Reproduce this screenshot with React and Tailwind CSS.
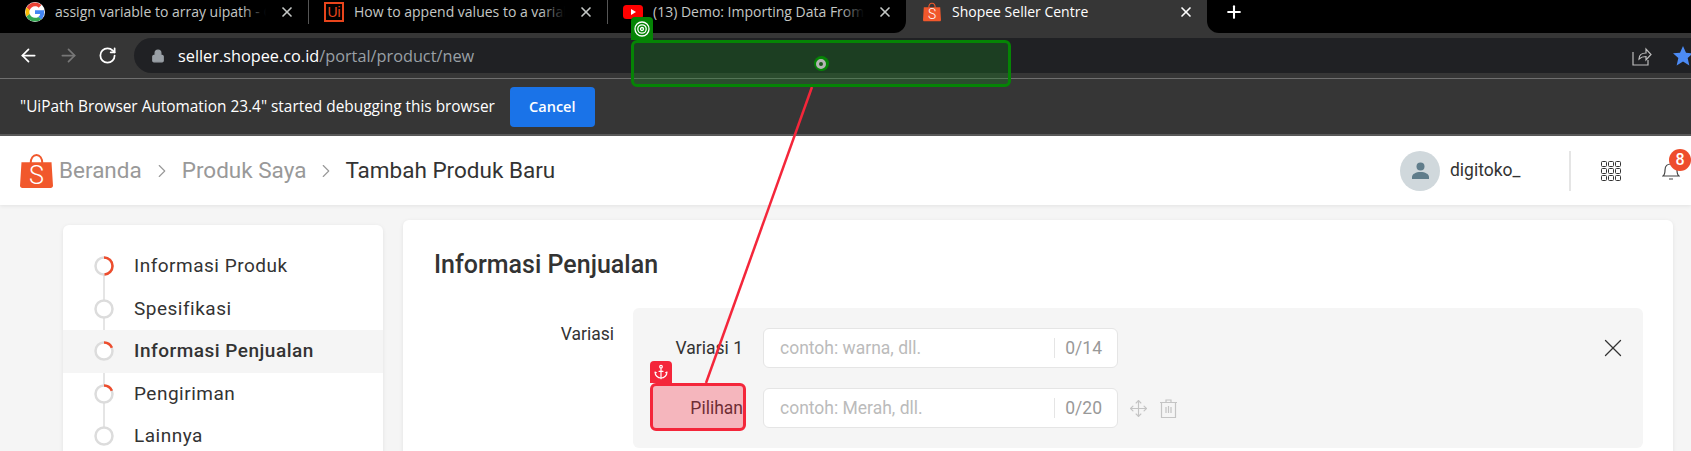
import React from "react";
import { ArrowLeft, ArrowRight, RotateCw, Lock, X, Plus, Anchor, ChevronRight, Move } from "lucide-react";

function GoogleIcon() {
  return (
    <svg width="20" height="20" viewBox="0 0 48 48" className="rounded-full bg-white">
      <path fill="#EA4335" d="M24 10c3.4 0 6.5 1.2 8.9 3.5l6.6-6.6C35.500 3.200 30.100 1 24 1 15 1 7.200 6.200 3.500 13.700l7.700 6C13 14.200 18 10 24 10z" />
      <path fill="#4285F4" d="M46 24.500c0-1.600-.1-3.100-.4-4.500H24v9h12.400c-.5 2.900-2.200 5.300-4.600 7l7.500 5.800C43.500 37.900 46 31.800 46 24.500z" />
      <path fill="#FBBC05" d="M11.200 28.700c-.5-1.400-.7-3-.7-4.700s.3-3.200.7-4.700l-7.700-6C2 16.400 1 20.100 1 24s1 7.600 2.500 10.700l7.700-6z" />
      <path fill="#34A853" d="M24 47c6.100 0 11.400-2 15.300-5.500L31.800 35.700c-2.100 1.400-4.700 2.300-7.800 2.300-6 0-11-4.200-12.800-9.300l-7.700 6C7.200 41.800 15 47 24 47z" />
    </svg>
  );
}

function UiIcon() {
  return (
    <div className="w-5 h-5 border-2 border-[#e8451c] flex items-center justify-center text-[14px] leading-none text-[#e8451c] font-['Liberation_Sans',sans-serif]">
      Ui
    </div>
  );
}

function YoutubeIcon() {
  return (
    <svg width="20" height="14" viewBox="0 0 20 14">
      <rect width="20" height="14" rx="3.500" fill="#f00" />
      <path d="M8 4l5 3-5 3z" fill="#fff" />
    </svg>
  );
}

function ShopeeBag({ width, height }) {
  return (
    <svg width={width} height={height} viewBox="0 0 34 36">
      <path d="M11 10c0-5 2.500-8.500 6-8.500S23 5 23 10" fill="none" stroke="#f1582c" strokeWidth="2" />
      <path d="M1.500 9h31L34 33c0 1.500-1 2.500-2.500 2.500h-29C1 35.500 0 34.500 0 33z" fill="#f1582c" />
      <text x="17" y="31" textAnchor="middle" fontSize="26" fill="#fff" fontFamily="Roboto, sans-serif" fontWeight="300">S</text>
    </svg>
  );
}

function Tab({ icon, title, width, active, separator, className }) {
  return (
    <div className={`h-[33px] flex items-start shrink-0 ${width} ${active ? "bg-[#363636] text-white" : "bg-black text-[#c4c7c5]"} ${className || ""}`}>
      <div className="flex-1 min-w-0 h-[23px] flex items-center">
        <div className="w-5 flex justify-center shrink-0">{icon}</div>
        <div className="relative flex-1 ml-[10px] overflow-hidden whitespace-nowrap text-[14px]">
          {title}
          {!active && <div className="absolute right-0 top-0 bottom-0 w-6 bg-gradient-to-r from-transparent to-black" />}
        </div>
        <X size={16} strokeWidth={2.500} className={`shrink-0 mx-[13px] ${active ? "text-white" : "text-[#c4c7c5]"}`} />
      </div>
      {separator && <div className="w-px h-6 bg-[#555] shrink-0" />}
    </div>
  );
}

function StepDot({ arc }) {
  return (
    <svg width="20" height="20" viewBox="0 0 20 20" className="-rotate-90 bg-transparent">
      <circle cx="10" cy="10" r="8.500" fill="#fff" stroke="#dcdcdc" strokeWidth="2.500" />
      <circle cx="10" cy="10" r="8.500" fill="none" stroke="#ee4d2d" strokeWidth="2.500" strokeDasharray={`${arc} 60`} />
    </svg>
  );
}

const steps = [
  { label: "Informasi Produk", arc: 26 },
  { label: "Spesifikasi", arc: 0 },
  { label: "Informasi Penjualan", arc: 10, current: true },
  { label: "Pengiriman", arc: 10 },
  { label: "Lainnya", arc: 0 },
];

function VariantRow({ label, placeholder, count, tools }) {
  return (
    <div className="flex items-center h-10">
      <div className="w-[110px] text-right text-[#333] text-[17.500px]">{label}</div>
      <div className="ml-5 w-[355px] h-10 bg-white border border-[#e5e5e5] rounded-md flex items-center pl-4 pr-[15px]">
        <span className="flex-1 text-[#bbb] text-[17.500px]">{placeholder}</span>
        <span className="h-5 w-px bg-[#e5e5e5] mr-[10px]" />
        <span className="text-[#999] text-[17.500px]">{count}</span>
      </div>
      {tools && (
        <div className="flex items-center ml-[11px] gap-3 text-[#c4c4c4]">
          <Move size={19} strokeWidth={1.500} />
          <svg width="17" height="19" viewBox="0 0 17 19" fill="none" stroke="currentColor" strokeWidth="1.200">
            <path d="M0 3.500h17M6 3.500V1h5v2.500M1.500 3.500v15h14v-15M6 8v6M8.500 7v7M11 8v6" />
          </svg>
        </div>
      )}
    </div>
  );
}

export default function App() {
  return (
    <div className="relative w-[1691px] h-[451px] overflow-hidden bg-[#f5f5f5] font-['Roboto',sans-serif]">
      {/* CHROME TABS */}
      <div className="flex h-[33px] bg-[#363636] font-['Open_Sans',sans-serif]">
        <Tab width="w-[309px] pl-[25px]" separator icon={<GoogleIcon />} title="assign variable to array uipath - Google Search" />
        <Tab width="w-[299px] pl-[15px]" separator icon={<UiIcon />} title="How to append values to a variable" />
        <Tab width="w-[298px] pl-[15px]" className="rounded-br-xl" icon={<YoutubeIcon />} title="(13) Demo: Importing Data From Excel" />
        <Tab width="w-[301px] pl-[16px]" active icon={<ShopeeBag width={18} height={20} />} title="Shopee Seller Centre" />
        <div className="flex-1 h-[33px] bg-black rounded-bl-xl text-white pl-[17px]">
          <div className="h-[23px] flex items-center">
            <Plus size={20} strokeWidth={2.500} />
          </div>
        </div>
      </div>

      {/* TOOLBAR */}
      <div className="h-[46px] bg-[#363636] border-b border-[#6f6f6f] flex items-start pt-[5px] font-['Open_Sans',sans-serif]">
        <div className="w-[134px] h-[35px] flex items-center shrink-0 pl-[18px] gap-[19px]">
          <ArrowLeft size={21} className="text-white" />
          <ArrowRight size={21} className="text-[#777]" />
          <RotateCw size={19} strokeWidth={2.200} className="text-white" />
        </div>
        <div className="flex-1 h-[35px] bg-[#202124] rounded-l-full flex items-center pl-[17px] pt-px overflow-hidden">
          <Lock size={14} fill="#9aa0a6" className="text-[#9aa0a6]" />
          <span className="ml-[13px] text-[16.300px] text-white">seller.shopee.co.id</span>
          <span className="text-[16.300px] text-[#9aa0a6]">/portal/product/new</span>
          <svg width="20" height="19" viewBox="0 0 20 19" fill="none" stroke="#bdbdbd" strokeWidth="1.200" className="ml-auto mr-[21px] shrink-0">
            <path d="M1 5v13h15v-5M7 12c0-4 3-6 7-6V2l5 5.500-5 5.500V9.500c-3 0-5 .5-7 2.500z" />
          </svg>
          <svg width="20" height="20" viewBox="0 0 18 18" className="shrink-0 -mr-[2px]">
            <path d="M9 0l2.700 6 6.300.6-4.800 4.200 1.500 6.700L9 14l-5.700 3.500 1.500-6.700L0 6.600 6.300 6z" fill="#4c8bf5" />
          </svg>
        </div>
      </div>

      {/* DEBUG INFOBAR */}
      <div className="h-[57px] bg-[#363636] border-b-2 border-[#5a5a5a] flex items-center pl-5 font-['Open_Sans',sans-serif] text-white">
        <span className="text-[15.400px] pt-px">"UiPath Browser Automation 23.4" started debugging this browser</span>
        <button className="ml-[15px] w-[85px] h-10 rounded bg-[#1a73e8] text-[14.500px] font-semibold">Cancel</button>
      </div>

      {/* SHOPEE HEADER */}
      <div className="h-[69px] bg-white shadow-[0_1px_4px_rgba(0,0,0,0.08)] flex items-center pl-5 pr-[11px] relative">
        <ShopeeBag width={33} height={36} />
        <span className="ml-[6px] text-[22.500px] text-[#999]">Beranda</span>
        <ChevronRight size={22} strokeWidth={1.250} className="mx-[9px] text-[#999]" />
        <span className="text-[22.500px] text-[#999]">Produk Saya</span>
        <ChevronRight size={22} strokeWidth={1.250} className="ml-[9px] mr-2 text-[#999]" />
        <span className="text-[22.500px] text-[#333]">Tambah Produk Baru</span>

        <div className="ml-auto w-10 h-10 rounded-full bg-[#d0d8dc] flex items-center justify-center">
          <svg width="17" height="17" viewBox="0 0 17 17" fill="#607d8b">
            <circle cx="8.500" cy="4.500" r="4" />
            <path d="M0 17v-2c0-3 4-5 8.500-5S17 12 17 15v2z" />
          </svg>
        </div>
        <span className="ml-[10px] text-[17.500px] text-[#333] w-[119px]">digitoko_</span>
        <div className="w-[2px] h-10 bg-[#e5e5e5]" />
        <div className="ml-[30px] grid grid-cols-3 gap-[1px] w-5">
          {[0, 1, 2, 3, 4, 5, 6, 7, 8].map((i) => (
            <div key={i} className="w-[6px] h-[6px] rounded-[1.500px] border border-[#333]" />
          ))}
        </div>
        <div className="relative ml-[41px] mr-0">
          <svg width="18" height="19" viewBox="0 0 18 19" fill="none" stroke="#444" strokeWidth="1.200">
            <path d="M1 15c1.500-1 2-3 2-6 0-4 2.500-6 6-6s6 2 6 6c0 3 .5 5 2 6zM7 18h4" />
          </svg>
          <div className="absolute -top-[12px] left-[7px] w-[22px] h-[22px] rounded-full bg-[#ee4d2d] text-white text-[16px] font-medium flex items-center justify-center">8</div>
        </div>
      </div>

      {/* PAGE BODY */}
      <div className="flex items-start pl-[63px] gap-5 pr-[18px]">
        {/* STEP NAV */}
        <div className="w-[320px] mt-5 h-[300px] bg-white rounded-md shadow-[0_1px_4px_rgba(0,0,0,0.08)] pt-5 shrink-0 relative">
          <div className="absolute left-[40px] top-[46px] w-[2px] h-[170px] bg-[#e5e5e5]" />
          {steps.map((s) => (
            <div key={s.label} className={`relative h-[42.500px] flex items-center pl-[31px] ${s.current ? "bg-[#f5f5f5]" : ""}`}>
              <StepDot arc={s.arc} />
              <span className={`ml-[20px] text-[19px] tracking-[0.5px] text-[#333] ${s.current ? "font-medium" : ""}`}>{s.label}</span>
            </div>
          ))}
        </div>

        {/* MAIN CARD */}
        <div className="flex-1 mt-[15px] h-[300px] bg-white rounded-md shadow-[0_1px_4px_rgba(0,0,0,0.08)] pt-[29px] pl-[31px] pr-[30px]">
          <h2 className="text-[25px] leading-8 font-medium text-[#333] mb-[27px]">Informasi Penjualan</h2>
          <div className="flex items-start">
            <div className="w-[180px] mt-[13px] text-right text-[17.500px] text-[#333] shrink-0">Variasi</div>
            <div className="relative ml-[19px] flex-1 h-[140px] bg-[#f5f5f5] rounded-md pt-5 flex flex-col gap-5">
              <VariantRow label="Variasi 1" placeholder="contoh: warna, dll." count="0/14" />
              <VariantRow label="Pilihan" placeholder="contoh: Merah, dll." count="0/20" tools />
              <X size={30} strokeWidth={1} className="absolute right-[15px] top-[25px] text-[#333]" />
            </div>
          </div>
        </div>
      </div>

      {/* AUTOMATION OVERLAY */}
      <svg className="absolute inset-0 pointer-events-none" width="1691" height="451">
        <line x1="812" y1="87" x2="706" y2="383" stroke="#f4263a" strokeWidth="2.500" />
      </svg>
      <div className="absolute left-[631px] top-[40px] w-[380px] h-[47px] rounded-md border-[3px] border-[#058405] bg-[rgba(20,128,30,0.3)] flex items-center justify-center">
        <div className="w-[15px] h-[15px] rounded-full bg-[#058405] flex items-center justify-center">
          <div className="w-[10px] h-[10px] rounded-full border-[3px] border-[#b4b4b4] bg-[#1a5a1a]" />
        </div>
      </div>
      <div className="absolute left-[631px] top-[17px] w-[22px] h-[23px] rounded-t bg-[#058405] flex items-center justify-center">
        <svg width="16" height="16" viewBox="0 0 16 16" fill="none" stroke="#fff" strokeWidth="1.300">
          <circle cx="8" cy="8" r="7" />
          <circle cx="8" cy="8" r="4.200" />
          <circle cx="8" cy="8" r="1.500" />
        </svg>
      </div>
      <div className="absolute left-[650px] top-[383px] w-[96px] h-[48px] rounded-md border-[3px] border-[#f4263a] bg-[#f4263a]/30" />
      <div className="absolute left-[650px] top-[361px] w-[22px] h-[22px] rounded-t bg-[#f4263a] flex items-center justify-center text-white">
        <Anchor size={16} strokeWidth={1.750} />
      </div>
    </div>
  );
}
